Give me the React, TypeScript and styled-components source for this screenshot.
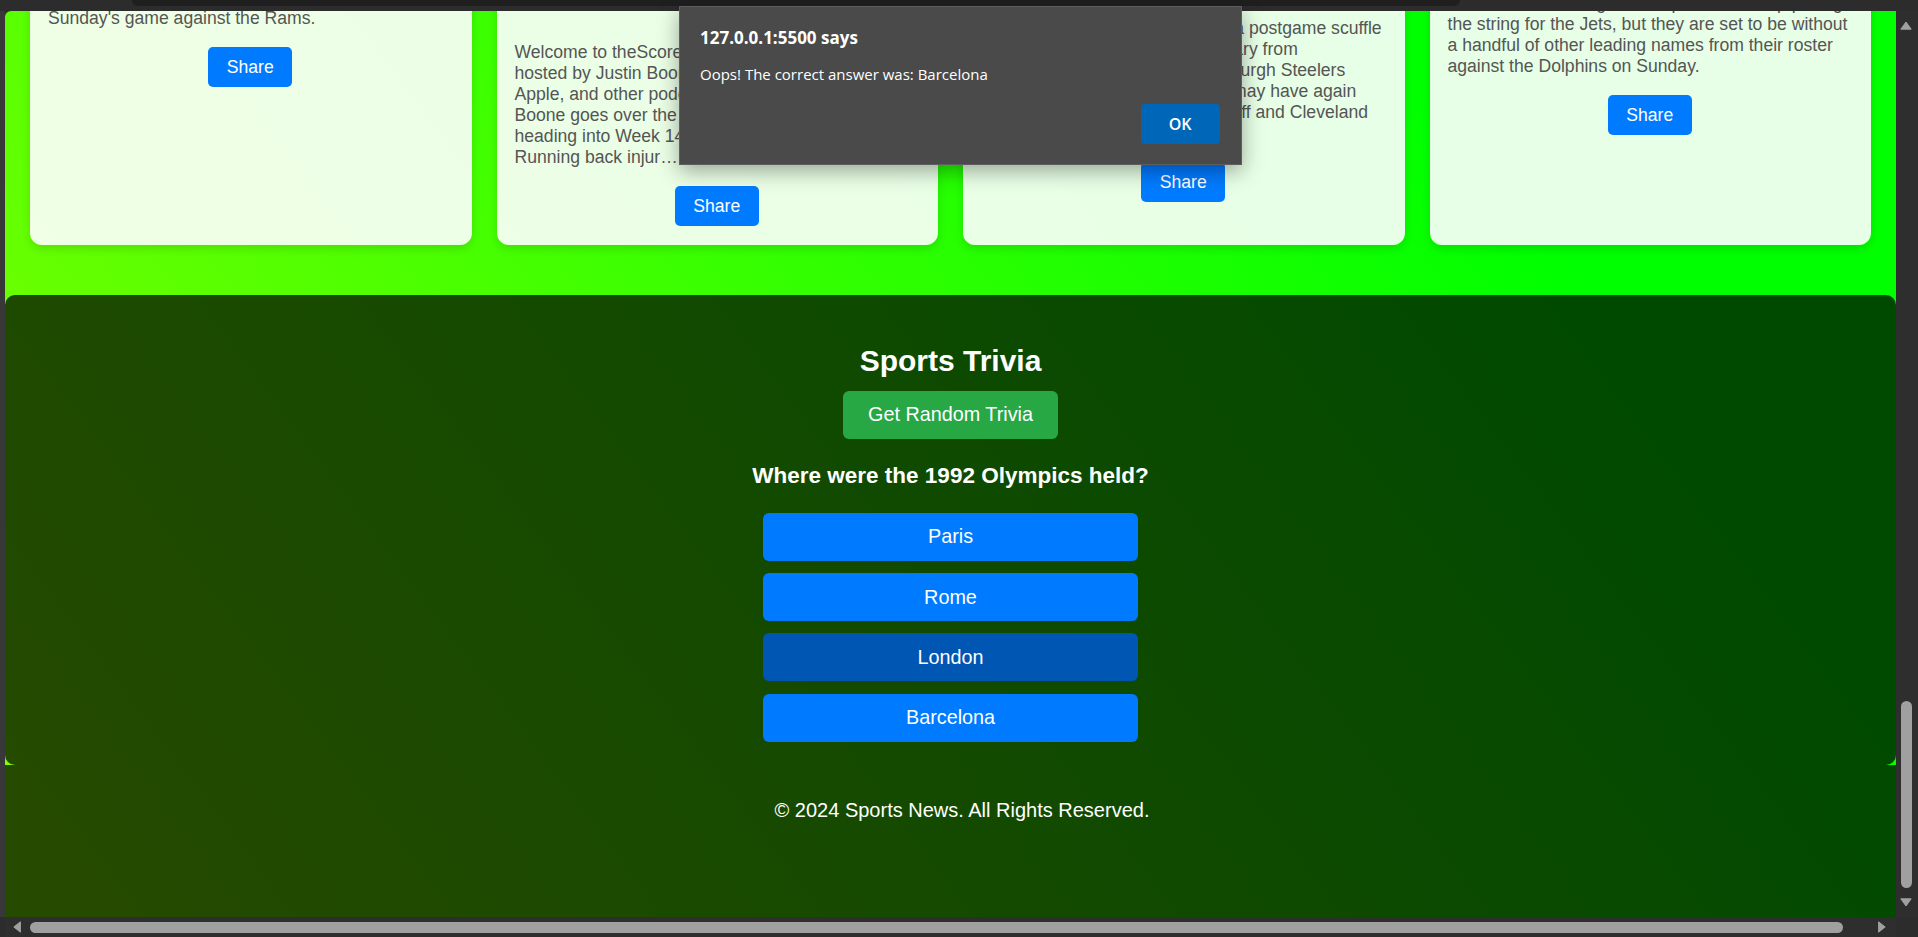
import React from "react";
import styled, { createGlobalStyle } from "styled-components";

const SANS = `"Liberation Sans", Arial, sans-serif`;
const UI = `"Open Sans", "Noto Sans", sans-serif`;

type Article = {
  id: number;
  title: string;
  description: string;
  imageHeight: number;
  imageTone: string;
};

const articles: Article[] = [
  {
    id: 1,
    title: "Bills WR Keon Coleman ruled out for Week 14 matchup with Rams",
    description:
      "Buffalo Bills wide receiver Keon Coleman has been ruled out with a wrist injury once again heading into Sunday's game against the Rams.",
    imageHeight: 164.6,
    imageTone: "#4d6f96",
  },
  {
    id: 2,
    title: "Fantasy Football Week 14: Start 'em, sit 'em podcast",
    description:
      "Welcome to theScore's fantasy football podcast, hosted by Justin Boone. Listen now on Spotify, Apple, and other podcast platforms. In this episode, Boone goes over the biggest fantasy storylines heading into Week 14, including a look at the latest. Running back injur…",
    imageHeight: 240,
    imageTone: "#7a4d96",
  },
  {
    id: 3,
    title: "Browns, Steelers renew rivalry after heated finish",
    description:
      "Jameis Winston was involved in a postgame scuffle with two members of the secondary from Cleveland's hated rival, the Pittsburgh Steelers Sunday, and both organizations may have again reignited a feud between their staff and Cleveland players near the tunnel.",
    imageHeight: 216.7,
    imageTone: "#96704d",
  },
  {
    id: 4,
    title: "Jets injury report: Key starters out vs. Dolphins",
    description:
      "Veteran Aaron Rodgers is expected to keep pulling the string for the Jets, but they are set to be without a handful of other leading names from their roster against the Dolphins on Sunday.",
    imageHeight: 191.4,
    imageTone: "#2f7a63",
  },
];

const answers = ["Paris", "Rome", "London", "Barcelona"];
const picked = "London";

const GlobalStyle = createGlobalStyle`
  * { box-sizing: border-box; }
  html, body {
    margin: 0;
    padding: 0;
    overflow: hidden;
    background: #2c2c2c;
    font-family: ${SANS};
  }
`;

const Frame = styled.div`
  position: relative;
  width: 1918px;
  height: 937px;
  display: grid;
  grid-template-columns: 5px 1891px 22px;
  grid-template-rows: 11px 906px 20px;
  background: #2c2c2c;
`;

const TopBar = styled.div`
  grid-column: 1 / -1;
  grid-row: 1;
  padding-left: 132px;
`;

const TabEdge = styled.div`
  width: 1328px;
  height: 6px;
  background: #1f1f1f;
  border-radius: 0 0 7px 7px;
`;

const LeftEdge = styled.div`
  grid-column: 1;
  grid-row: 2;
  background: #383838;
`;

const Viewport = styled.main`
  grid-column: 2;
  grid-row: 2;
  min-width: 0;
  overflow: hidden;
  border-top-left-radius: 6px;
  display: flex;
  flex-direction: column;
  justify-content: flex-end;
  background: linear-gradient(53deg, #7fff00 5%, #00ff00 80%);
  font-family: ${SANS};
`;

const PageHeader = styled.header`
  flex-shrink: 0;
  padding: 30px 25px;
  text-align: center;
  color: #fff;
  font-size: 32px;
  font-weight: bold;
`;

const NewsGrid = styled.section`
  flex-shrink: 0;
  display: grid;
  grid-template-columns: repeat(4, minmax(0, 1fr));
  gap: 25px;
  padding: 0 25px 50px;
`;

const Card = styled.article`
  min-width: 0;
  display: flex;
  flex-direction: column;
  padding: 18px 19px 19px 18px;
  background: rgba(255, 255, 255, 0.9);
  border-radius: 12px;
  box-shadow: 0 4px 10px rgba(0, 0, 0, 0.12);
`;

const Thumb = styled.div<{ $h: number; $tone: string }>`
  height: ${(p) => p.$h}px;
  margin-bottom: 14px;
  border-radius: 8px;
  background: linear-gradient(160deg, ${(p) => p.$tone}, #1d2b3a);
`;

const CardTitle = styled.h3`
  margin: 0 0 32px;
  min-width: 0;
  font-size: 19.8px;
  line-height: 24px;
  font-weight: bold;
  color: #222;
  white-space: nowrap;
  overflow: hidden;
  text-overflow: ellipsis;
`;

const CardText = styled.p`
  margin: 0 0 18px;
  font-size: 17.6px;
  line-height: 21px;
  color: #555;
`;

const ShareButton = styled.button`
  align-self: center;
  padding: 10px 18.5px;
  border: none;
  border-radius: 5px;
  background: #007bff;
  color: #fff;
  font-family: ${SANS};
  font-size: 17.6px;
  line-height: 20px;
  cursor: pointer;
`;

const TriviaSection = styled.section`
  flex-shrink: 0;
  display: flex;
  flex-direction: column;
  align-items: center;
  padding: 49px 20px 23.3px;
  background: rgba(0, 0, 0, 0.71);
  border-radius: 10px;
  color: #fff;
`;

const TriviaTitle = styled.h2`
  margin: 0 0 12.5px;
  font-size: 30px;
  line-height: 34.5px;
  font-weight: bold;
`;

const RandomButton = styled.button`
  margin-bottom: 24.3px;
  padding: 12.5px 25px;
  border: none;
  border-radius: 6px;
  background: #28a745;
  color: #fff;
  font-family: ${SANS};
  font-size: 19.8px;
  line-height: 23px;
  cursor: pointer;
`;

const Question = styled.h3`
  margin: 0 0 23.9px;
  font-size: 22.5px;
  line-height: 25.85px;
  font-weight: bold;
`;

const AnswerList = styled.div`
  display: flex;
  flex-direction: column;
  gap: 12.3px;
  width: 375px;
`;

const AnswerButton = styled.button<{ $active: boolean }>`
  height: 48px;
  border: none;
  border-radius: 6px;
  background: ${(p) => (p.$active ? "#0056b3" : "#007bff")};
  color: #fff;
  font-family: ${SANS};
  font-size: 19.8px;
  cursor: pointer;
`;

const Footer = styled.footer`
  flex-shrink: 0;
  padding: 34px 0 95px 23px;
  background: rgba(0, 0, 0, 0.71);
  color: #fff;
  text-align: center;
  font-size: 20px;
  line-height: 23px;
`;

const VScroll = styled.div`
  grid-column: 3;
  grid-row: 2;
  display: flex;
  flex-direction: column;
  align-items: center;
  padding: 10px 2px 10px 0;
  background: #2e2e2e;
`;

const VTrack = styled.div`
  flex: 1;
  display: flex;
  flex-direction: column;
  justify-content: flex-end;
  padding-bottom: 10px;
`;

const VThumb = styled.div<{ $size: number }>`
  width: 11px;
  height: ${(p) => p.$size}px;
  border-radius: 6px;
  background: #a0a0a0;
`;

const HScroll = styled.div`
  grid-column: 2;
  grid-row: 3;
  display: flex;
  align-items: center;
  padding: 0 10px 0 8px;
  background: #2e2e2e;
`;

const HTrack = styled.div`
  flex: 1;
  display: flex;
  align-items: center;
  padding-left: 9px;
`;

const HThumb = styled.div<{ $size: number }>`
  width: ${(p) => p.$size}px;
  height: 11px;
  border-radius: 6px;
  background: #a0a0a0;
`;

const Corner = styled.div`
  grid-column: 3;
  grid-row: 3;
  background: #2c2c2c;
`;

const Dialog = styled.div`
  position: absolute;
  left: 679px;
  top: 6px;
  width: 563px;
  height: 159px;
  display: flex;
  flex-direction: column;
  padding: 21.4px 21.4px 20px 20px;
  background: #4a4a4a;
  border: 1px solid #5e5e5e;
  box-shadow: 0 6px 20px rgba(0, 0, 0, 0.35);
  font-family: ${UI};
  color: #fff;
`;

const DialogTitle = styled.div`
  font-size: 17px;
  line-height: 20px;
  font-weight: bold;
`;

const DialogMessage = styled.div`
  margin-top: 15.8px;
  font-size: 15px;
  line-height: 20px;
`;

const DialogActions = styled.div`
  margin-top: auto;
  display: flex;
  justify-content: flex-end;
`;

const OkButton = styled.button`
  width: 79px;
  height: 40px;
  border: none;
  border-radius: 4px;
  background: #0067b8;
  color: #fff;
  font-family: ${UI};
  font-size: 16px;
  font-weight: 600;
  cursor: pointer;
`;

const Arrow = ({ dir }: { dir: "up" | "down" | "left" | "right" }) => {
  const vertical = dir === "up" || dir === "down";
  const w = vertical ? 12 : 8;
  const h = vertical ? 9 : 12;
  const d =
    dir === "up"
      ? "M6 1 L11.2 8.2 L0.8 8.2 Z"
      : dir === "down"
      ? "M0.8 0.8 L11.2 0.8 L6 8 Z"
      : dir === "left"
      ? "M7.4 0.8 L7.4 11.2 L0.8 6 Z"
      : "M0.6 0.8 L7.2 6 L0.6 11.2 Z";
  return (
    <svg width={w} height={h} viewBox={`0 0 ${w} ${h}`} aria-hidden>
      <path d={d} fill="#a0a0a0" stroke="#a0a0a0" strokeWidth="1" strokeLinejoin="round" />
    </svg>
  );
};

export default function App() {
  return (
    <>
      <GlobalStyle />
      <Frame>
        <TopBar>
          <TabEdge />
        </TopBar>
        <LeftEdge />
        <Viewport>
          <PageHeader>Sports News</PageHeader>
          <NewsGrid>
            {articles.map((a) => (
              <Card key={a.id}>
                <Thumb $h={a.imageHeight} $tone={a.imageTone} />
                <CardTitle>{a.title}</CardTitle>
                <CardText>{a.description}</CardText>
                <ShareButton>Share</ShareButton>
              </Card>
            ))}
          </NewsGrid>
          <TriviaSection>
            <TriviaTitle>Sports Trivia</TriviaTitle>
            <RandomButton>Get Random Trivia</RandomButton>
            <Question>Where were the 1992 Olympics held?</Question>
            <AnswerList>
              {answers.map((ans) => (
                <AnswerButton key={ans} $active={ans === picked}>
                  {ans}
                </AnswerButton>
              ))}
            </AnswerList>
          </TriviaSection>
          <Footer>© 2024 Sports News. All Rights Reserved.</Footer>
        </Viewport>
        <VScroll>
          <Arrow dir="up" />
          <VTrack>
            <VThumb $size={187} />
          </VTrack>
          <Arrow dir="down" />
        </VScroll>
        <HScroll>
          <Arrow dir="left" />
          <HTrack>
            <HThumb $size={1813} />
          </HTrack>
          <Arrow dir="right" />
        </HScroll>
        <Corner />
        <Dialog role="alertdialog">
          <DialogTitle>127.0.0.1:5500 says</DialogTitle>
          <DialogMessage>Oops! The correct answer was: Barcelona</DialogMessage>
          <DialogActions>
            <OkButton>OK</OkButton>
          </DialogActions>
        </Dialog>
      </Frame>
    </>
  );
}
